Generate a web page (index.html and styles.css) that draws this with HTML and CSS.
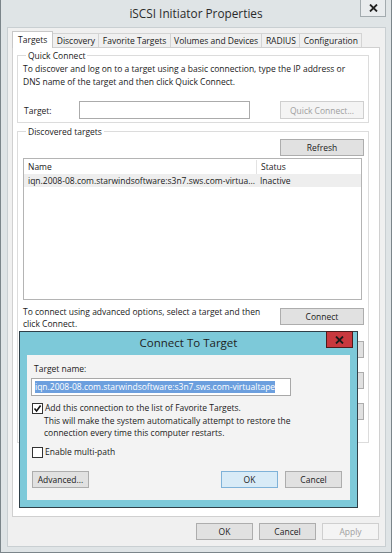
FILE: index.html
```html
<!DOCTYPE html>
<html lang="en">
<head>
  <meta charset="utf-8" />
  <title>iSCSI Initiator Properties</title>
  <link rel="stylesheet" href="styles.css">
</head>
<body>
  <div class="window">
    <div class="titlebar">
      <span class="title">iSCSI Initiator Properties</span>
      <span class="win-close">
        <svg width="9" height="8" viewBox="0 0 9 8"><path d="M1 0.5 L8 7.5 M8 0.5 L1 7.5" stroke="#222" stroke-width="1.8"/></svg>
      </span>
    </div>

    <div class="client">
      <div class="tabs">
        <span class="tab active">Targets</span>
        <span class="tab">Discovery</span>
        <span class="tab">Favorite Targets</span>
        <span class="tab">Volumes and Devices</span>
        <span class="tab">RADIUS</span>
        <span class="tab">Configuration</span>
      </div>

      <div class="panel">
        <fieldset class="group quick">
          <legend>Quick Connect</legend>
          <p class="text">To discover and log on to a target using a basic connection, type the IP address or<br>DNS name of the target and then click Quick Connect.</p>
          <div class="target-row">
            <span class="label">Target:</span>
            <span class="field"></span>
            <span class="btn disabled wide">Quick Connect...</span>
          </div>
        </fieldset>

        <fieldset class="group discovered">
          <legend>Discovered targets</legend>
          <div class="right-row"><span class="btn wide">Refresh</span></div>
          <div class="list">
            <div class="list-head">
              <span class="col-name">Name</span>
              <span class="col-status">Status</span>
            </div>
            <div class="list-item">
              <span class="col-name">iqn.2008-08.com.starwindsoftware:s3n7.sws.com-virtua...</span>
              <span class="col-status">Inactive</span>
            </div>
          </div>
          <div class="connect-row">
            <p class="text">To connect using advanced options, select a target and then<br>click Connect.</p>
            <span class="btn wide">Connect</span>
          </div>
          <div class="right-row stub"><span class="btn wide">Disconnect</span></div>
          <div class="right-row stub"><span class="btn wide">Properties...</span></div>
          <div class="right-row stub"><span class="btn wide">Devices...</span></div>
        </fieldset>
      </div>

      <div class="footer">
        <span class="btn">OK</span>
        <span class="btn">Cancel</span>
        <span class="btn disabled">Apply</span>
      </div>
    </div>

    <div class="dialog">
      <div class="dlg-title">Connect To Target</div>
      <span class="dlg-close">
        <svg width="9" height="8" viewBox="0 0 9 8"><path d="M1 0.5 L8 7.5 M8 0.5 L1 7.5" stroke="#1a1a1a" stroke-width="1.8"/></svg>
      </span>
      <div class="dlg-body">
        <div class="dlg-label">Target name:</div>
        <div class="dlg-field"><span class="selected">iqn.2008-08.com.starwindsoftware:s3n7.sws.com-virtualtape</span></div>
        <div class="check-row">
          <span class="box checked">
            <svg width="9" height="9" viewBox="0 0 9 9"><path d="M1.5 4.5 L3.6 7 L7.6 1.5" fill="none" stroke="#111" stroke-width="1.6"/></svg>
          </span>
          <span>Add this connection to the list of Favorite Targets.</span>
        </div>
        <p class="note">This will make the system automatically attempt to restore the<br>connection every time this computer restarts.</p>
        <div class="check-row multi">
          <span class="box"></span>
          <span>Enable multi-path</span>
        </div>
        <div class="dlg-buttons">
          <span class="btn">Advanced...</span>
          <span class="spacer"></span>
          <span class="btn default">OK</span>
          <span class="btn">Cancel</span>
        </div>
      </div>
    </div>
  </div>
</body>
</html>
```

FILE: styles.css
```css
* {
  box-sizing:border-box;
}
body {
  margin:0;
  font-family:'Open Sans',sans-serif;
  font-size:8.5px;
  color:#1b1b1b;
  background:#dfe4e6;
  white-space:nowrap;
}
.window {
  position:relative;
  width:392px;
  height:553px;
  background:#dfe4e6;
  border:1px solid #7b858a;
  border-top:none;
  display:flex;
  flex-direction:column;
}
.titlebar {
  height:27px;
  flex:none;
  display:flex;
  align-items:center;
  justify-content:center;
  position:relative;
}
.title {
  font-size:11.8px;
  color:#2b2b2b;
  margin-top:-2px;
}
.win-close {
  position:absolute;
  right:5px;
  top:0;
  width:26px;
  height:17px;
  border:1px solid #a3abaf;
  border-top:none;
  background:#e9ecee;
  display:flex;
  align-items:center;
  justify-content:center;
}
.client {
  flex:1;
  margin:0 5px 5px 6px;
  background:#f0f0f0;
  border:1px solid #c9cfd2;
  padding:3px 5px 6px 4px;
  display:flex;
  flex-direction:column;
}

/* tabs */
.tabs {
  display:flex;
  align-items:flex-end;
  height:16px;
  flex:none;
  position:relative;
  z-index:1;
}
.tab {
  height:14px;
  line-height:13px;
  padding:0 3.4px;
  border:1px solid #d4d4d4;
  border-bottom:none;
  margin-left:-1px;
  background:#f0f0f0;
}
.tab.active {
  height:17px;
  line-height:15px;
  margin-left:0;
  margin-bottom:-1px;
  background:#fff;
  border-color:#c8c8c8;
  padding:0 5px;
}
.tab.active + .tab {
  margin-left:0;
  border-left:none;
}
.panel {
  flex:1;
  background:#fff;
  border:1px solid #d0d0d0;
  padding:1px 10px 0 4px;
  display:flex;
  flex-direction:column;
}

/* group boxes */
.group {
  margin:0;
  border:1px solid #dcdcdc;
  padding:0 4px 3px 5px;
}
.group legend {
  padding:0 2px;
  margin-left:3px;
  line-height:13px;
}
.text {
  margin:0;
  line-height:13px;
}
.target-row {
  display:flex;
  align-items:center;
  margin-top:13px;
  padding-left:1px;
}
.label {
  width:55px;
}
.field {
  width:171px;
  height:18px;
  border:1px solid #ababab;
  background:#fff;
}
.target-row .btn {
  margin-left:auto;
  height:18px;
}
.discovered {
  margin-top:2px;
  height:318px;
}

/* buttons */
.btn {
  display:inline-flex;
  align-items:center;
  justify-content:center;
  height:17px;
  width:57px;
  border:1px solid #adadad;
  background:#e1e1e1;
}
.btn.wide {
  width:84px;
}
.btn.disabled {
  background:#f4f4f4;
  border-color:#cfcfcf;
  color:#a0a0a0;
}
.btn.default {
  background:#d8ebf7;
  border-color:#7fb2d8;
}
.right-row {
  display:flex;
  justify-content:flex-end;
  margin-top:1px;
}

/* list */
.list {
  margin-top:2px;
  margin-right:2px;
  height:142px;
  border:1px solid #b4b4b4;
  background:#fff;
}
.list-head,
.list-item {
  display:flex;
  line-height:13px;
}
.list-head {
  height:15px;
  padding-top:1px;
}
.list-item {
  background:#eeeeee;
}
.col-name {
  width:232px;
  padding-left:4px;
  overflow:hidden;
}
.list-head .col-status {
  border-left:1px solid #e3e3e3;
}
.col-status {
  padding-left:4px;
}
.connect-row {
  display:flex;
  align-items:flex-start;
  justify-content:space-between;
  margin-top:6px;
}
.connect-row .text {
  line-height:11.5px;
}
.connect-row .btn {
  margin-top:2px;
}
.stub {
  margin-top:12px;
}
.stub + .stub {
  margin-top:14px;
}

/* footer */
.footer {
  flex:none;
  display:flex;
  justify-content:flex-end;
  gap:6px;
  margin-top:6px;
  padding-right:1px;
}

/* dialog */
.dialog {
  position:absolute;
  left:18px;
  top:331px;
  width:339px;
  height:177px;
  border:1px solid #2f3f48;
  background:#7dc9d9;
  display:flex;
  flex-direction:column;
  z-index:5;
}
.dlg-title {
  height:23px;
  flex:none;
  text-align:center;
  font-size:11.5px;
  line-height:22px;
  color:#1e1e1e;
}
.dlg-close {
  position:absolute;
  left:306px;
  top:-1px;
  width:27px;
  height:17px;
  background:#c8383e;
  border:1px solid #4f1a1c;
  display:flex;
  align-items:center;
  justify-content:center;
}
.dlg-body {
  flex:1;
  margin:0 7px 7px;
  background:#f3f3f3;
  padding:8px 8px 0 4px;
}
.dlg-label {
  line-height:12px;
  padding-left:3px;
}
.dlg-field {
  margin-top:3px;
  width:260px;
  height:18px;
  border:1px solid #a8a8a8;
  background:#fff;
  padding:2px 3px;
}
.selected {
  display:inline-block;
  background:#6c9fde;
  color:#fff;
  line-height:12px;
}
.check-row {
  display:flex;
  align-items:center;
  gap:2px;
  margin-top:6px;
  padding-left:1px;
  line-height:12px;
}
.box {
  width:11px;
  height:11px;
  border:1px solid #333;
  background:#fff;
  display:flex;
  align-items:center;
  justify-content:center;
}
.note {
  margin:1px 0 0 13px;
  line-height:12px;
}
.check-row.multi {
  margin-top:7px;
}
.dlg-buttons {
  display:flex;
  gap:7px;
  margin-top:13px;
  padding-left:1px;
}
.dlg-buttons .spacer {
  flex:1;
}
```
